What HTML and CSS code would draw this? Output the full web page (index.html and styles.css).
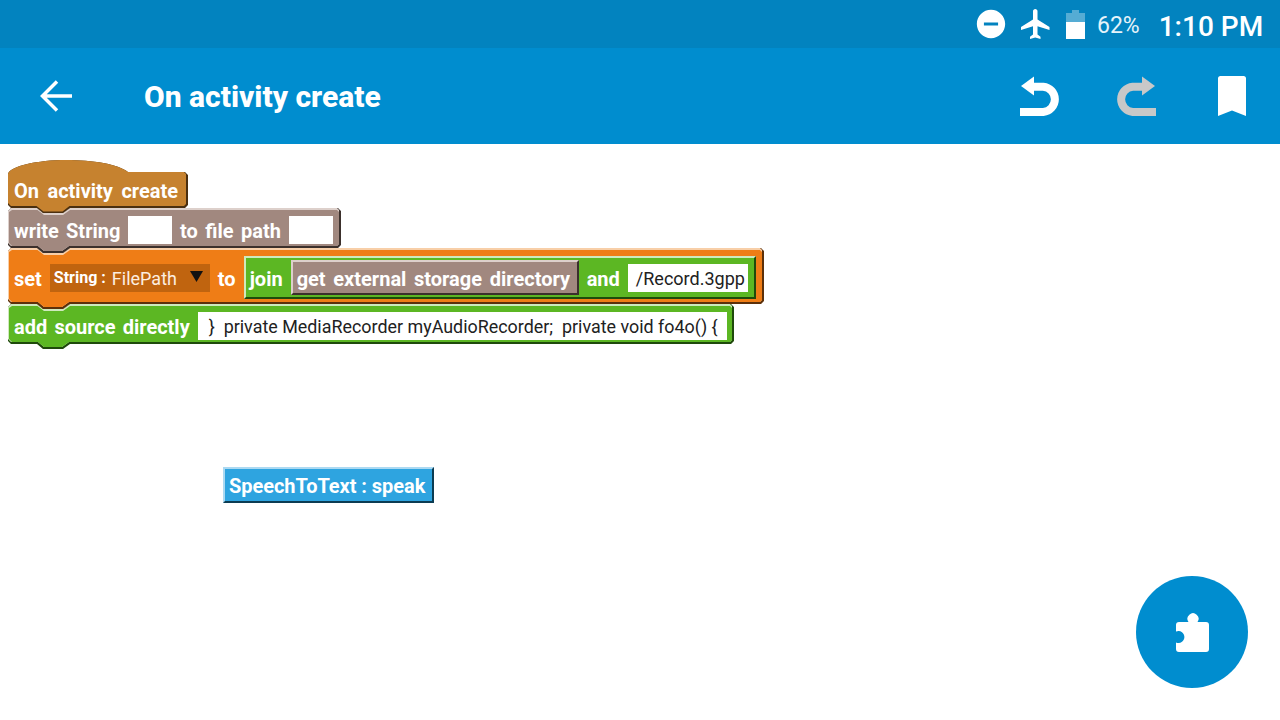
FILE: index.html
```html
<!DOCTYPE html>
<html lang="en">
<head>
<meta charset="utf-8">
<title>On activity create</title>
<link rel="stylesheet" href="styles.css">
</head>
<body>
<div class="page">
  <div class="statusbar">
    <svg class="st-dnd" viewBox="0 0 24 24"><path d="M12 2C6.48 2 2 6.48 2 12s4.48 10 10 10 10-4.48 10-10S17.52 2 12 2zm5 11H7v-2h10v2z"/></svg>
    <svg class="st-plane" viewBox="0 0 24 24"><path d="M21 16v-2l-8-5V3.5c0-.83-.67-1.5-1.5-1.5S10 2.67 10 3.5V9l-8 5v2l8-2.5V19l-2 1.5V22l3.5-1 3.5 1v-1.5L13 19v-5.5l8 2.5z"/></svg>
    <svg class="st-batt" viewBox="0 0 19 29"><path class="batt-empty" d="M0 3h6V0h7v3h6v9H0z"/><path d="M0 12h19v17H0z"/></svg>
    <span class="st-pct">62%</span>
    <span class="st-time">1:10 PM</span>
  </div>
  <div class="appbar">
    <svg class="ab-back" viewBox="0 0 48 48"><path d="M40 24H10M25 9.500 10.500 24 25 38.500"/></svg>
    <div class="ab-title">On activity create</div>
    <svg class="ab-undo" viewBox="0 0 48 48"><path class="hook" d="M12 14.700H27.300A12.700 12.700 0 0 1 27.300 40H4"/><path d="M5 14 18 4.500V23.500Z"/></svg>
    <svg class="ab-redo" viewBox="0 0 48 48"><path class="hook" d="M36 14.700H20.700A12.700 12.700 0 0 0 20.700 40H44"/><path d="M43 14 30 4.500V23.500Z"/></svg>
    <svg class="ab-mark" viewBox="0 0 28 40"><path d="M0 2.500A2.500 2.500 0 0 1 2.500 0H25.500A2.500 2.500 0 0 1 28 2.500V40L14 34.500 0 40Z"/></svg>
  </div>
  <div class="canvas">
    <div class="stack">
      <div class="block b-hat">
        <svg class="shape" width="182" height="56"><path class="dk" d="M0 14C2 6 30 0 58 0C85 0 110 4 120 12H177L180 15V45L177 48H62L55 53H35L29 48H3L0 45Z"/><path class="mn" d="M0 14C2 6 30 0 58 0C85 0 110 4 120 12H176L178 14V44L176 46H61.500L54.500 51.500H35.500L28.500 46H3L0 43Z"/></svg>
        <span class="lbl lbl-hat">On activity create</span>
      </div>
      <div class="block b-write">
        <svg class="shape" width="335" height="48"><path class="dk" d="M0 3 3 0H29L35 5H55L62 0H330L333 3V37L330 40H62L55 45H35L29 40H3L0 37Z"/><path class="lt" d="M0 3 3 0H29L35 5H55L62 0H329L331 2V36L329 38H61L54 43H36L30 38H3L0 35Z"/><path class="mn" d="M1 4 4 2H29.500L36 7H55L62 2H329L331 4V36L329 38H61L54 43H36L30 38H4L1 35Z"/></svg>
        <span class="lbl lbl-write">write String</span><span class="box box-a"></span><span class="lbl lbl-file">to file path</span><span class="box box-a"></span>
      </div>
      <div class="block b-set">
        <svg class="shape" width="758" height="64"><path class="dk" d="M0 3 3 0H29L35 5H55L62 0H753L756 3V53L753 56H62L55 61H35L29 56H3L0 53Z"/><path class="lt" d="M0 3 3 0H29L35 5H55L62 0H752L754 2V52L752 54H61L54 59H36L30 54H3L0 51Z"/><path class="mn" d="M1 4 4 2H29.500L36 7H55L62 2H752L754 4V52L752 54H61L54 59H36L30 54H4L1 51Z"/></svg>
        <span class="lbl">set</span>
        <span class="drop"><span class="drop-key">String :</span><span class="drop-val">FilePath</span><svg class="drop-arrow" viewBox="0 0 13 11"><path d="M0 0H13L6.500 11Z"/></svg></span>
        <span class="lbl">to</span>
        <span class="join">
          <span class="lbl">join</span>
          <span class="getter"><span class="lbl lbl-get">get external storage directory</span></span>
          <span class="lbl">and</span>
          <span class="box box-b">/Record.3gpp</span>
        </span>
      </div>
      <div class="block b-src">
        <svg class="shape" width="728" height="48"><path class="dk" d="M0 3 3 0H29L35 5H55L62 0H723L726 3V37L723 40H62L55 45H35L29 40H3L0 37Z"/><path class="lt" d="M0 3 3 0H29L35 5H55L62 0H722L724 2V36L722 38H61L54 43H36L30 38H3L0 35Z"/><path class="mn" d="M1 4 4 2H29.500L36 7H55L62 2H722L724 4V36L722 38H61L54 43H36L30 38H4L1 35Z"/></svg>
        <span class="lbl">add source directly</span>
        <span class="box box-c">}  private MediaRecorder myAudioRecorder;  private void fo4o() {</span>
      </div>
    </div>
    <div class="speech">SpeechToText : speak</div>
    <div class="fab">
      <svg class="fab-icon" viewBox="0 0 48 48"><path d="M11 14H20.500A5.500 5.500 0 1 1 29.500 14H38A3 3 0 0 1 41 17V41A3 3 0 0 1 38 44H11A3 3 0 0 1 8 41V34.500A6 6 0 1 0 8 23.500V17A3 3 0 0 1 11 14Z"/></svg>
    </div>
  </div>
</div>
</body>
</html>
```
FILE: styles.css
```css
* { box-sizing: border-box; }
html, body { margin: 0; padding: 0; background: #fff; }
body { font-family: Roboto, "Noto Sans", sans-serif; }
.page { width: 1280px; height: 720px; display: flex; flex-direction: column; overflow: hidden; }

/* status bar */
.statusbar { height: 48px; background: #0283bf; display: flex; align-items: center; color: #fff; padding-left: 974px; }
.statusbar svg { flex: none; display: block; fill: #fff; }
.st-dnd { width: 34px; height: 34px; }
.st-plane { width: 36px; height: 36px; margin-left: 10px; }
.st-batt { width: 19px; height: 29px; margin-left: 12px; }
.batt-empty { opacity: .33; }
.st-pct { font-size: 23px; margin-left: 12px; color: #e6f3fa; padding-top: 3px; }
.st-time { font-size: 28px; font-weight: 500; margin-left: 19px; padding-top: 4px; }

/* app bar */
.appbar { height: 96px; background: #008dcf; display: flex; align-items: center; padding-left: 32px; flex: none; }
.appbar svg { flex: none; display: block; }
.ab-back { width: 48px; height: 48px; fill: none; stroke: #fff; stroke-width: 3.500; }
.ab-title { color: #fff; font-size: 30px; font-weight: 800; margin-left: 64px; width: 872px; }
.ab-undo { width: 48px; height: 48px; fill: #fff; }
.ab-redo { width: 48px; height: 48px; fill: #c8c8c8; margin-left: 48px; }
.hook { fill: none; stroke-width: 8; }
.ab-undo .hook { stroke: #fff; }
.ab-redo .hook { stroke: #c8c8c8; }
.ab-mark { width: 28px; height: 40px; fill: #fff; margin-left: 58px; }

/* free canvas */
.canvas { position: relative; flex: 1; background: #fff; }
.stack { position: absolute; left: 8px; top: 16px; display: flex; flex-direction: column; }

/* blocks */
.block { position: relative; display: flex; gap: 8px; padding-left: 6px; padding-top: 8px; }
.shape { position: absolute; left: 0; top: 0; display: block; }
.block > .lbl, .block > .box, .block > .drop, .block > .join { position: relative; }
.lbl { color: #fff; font-size: 20px; font-weight: 700; line-height: 30px; word-spacing: 2.200px; white-space: nowrap; }
.lbl-hat { word-spacing: 3.500px; }
.lbl-write { width: 106px; }
.lbl-file { width: 101px; word-spacing: 2.500px; }
.lbl-get { word-spacing: 2.700px; }
.b-set .lbl { padding-top: 2px; }
.b-hat { height: 48px; padding-top: 16px; z-index: 4; width: 180px; }
.b-hat .dk { fill: #4a2f10; }
.b-hat .mn { fill: #c6822f; }
.b-write { height: 40px; z-index: 3; width: 333px; }
.b-write .dk { fill: #3b302c; }
.b-write .lt { fill: #ddd0cb; }
.b-write .mn { fill: #a1887f; }
.b-set { height: 56px; z-index: 2; width: 756px; align-items: center; padding-top: 3px; }
.b-set .dk { fill: #5c300a; }
.b-set .lt { fill: #f8cfa8; }
.b-set .mn { fill: #ef7d16; }
.b-src { height: 40px; z-index: 1; width: 726px; }
.b-src .dk { fill: #1f4a0b; }
.b-src .lt { fill: #cfe9bd; }
.b-src .mn { fill: #5cb723; }

.box { background: #fff; height: 28px; display: block; color: #212121; font-size: 18px; line-height: 30px; white-space: pre; flex: none; }
.box-a { width: 44px; }
.box-b { width: 120px; padding-left: 8px; }
.box-c { width: 529px; padding-left: 11px; font-size: 17.900px; }

.drop { width: 160px; height: 28px; background: #c0640f; display: flex; align-items: center; padding-left: 4px; flex: none; }
.drop-key { color: #fff; font-size: 16px; font-weight: 700; white-space: nowrap; width: 58px; }
.drop-val { color: #fdeee0; font-size: 18px; width: 78px; padding-top: 1px; }
.drop-arrow { width: 13px; height: 11px; fill: #111; margin-top: -3px; flex: none; }

.join { width: 512px; height: 43px; background: #5cb723; display: flex; align-items: center; gap: 8px; padding-left: 4px;
  border-style: solid; border-width: 2px; border-color: #cfe9bd #1f4a0b #1f4a0b #cfe9bd; flex: none; }
.getter { height: 35px; background: #a1887f; display: flex; align-items: center; padding: 0 0 0 4px; width: 288px; flex: none;
  border-style: solid; border-width: 2px; border-color: #ddd0cb #3b302c #3b302c #ddd0cb; }

.speech { position: absolute; left: 223px; top: 323px; width: 211px; height: 36px; background: #2ea4e0; color: #fff;
  font-size: 20px; font-weight: 700; line-height: 34px; letter-spacing: -.05px; padding-left: 4px; white-space: nowrap;
  border-style: solid; border-width: 2px; border-color: #abd9f2 #0c3c52 #0c3c52 #abd9f2; }

.fab { position: absolute; left: 1136px; top: 432px; width: 112px; height: 112px; border-radius: 50%; background: #008dcf;
  display: flex; align-items: center; justify-content: center; }
.fab-icon { width: 48px; height: 48px; fill: #fff; display: block; }
```
